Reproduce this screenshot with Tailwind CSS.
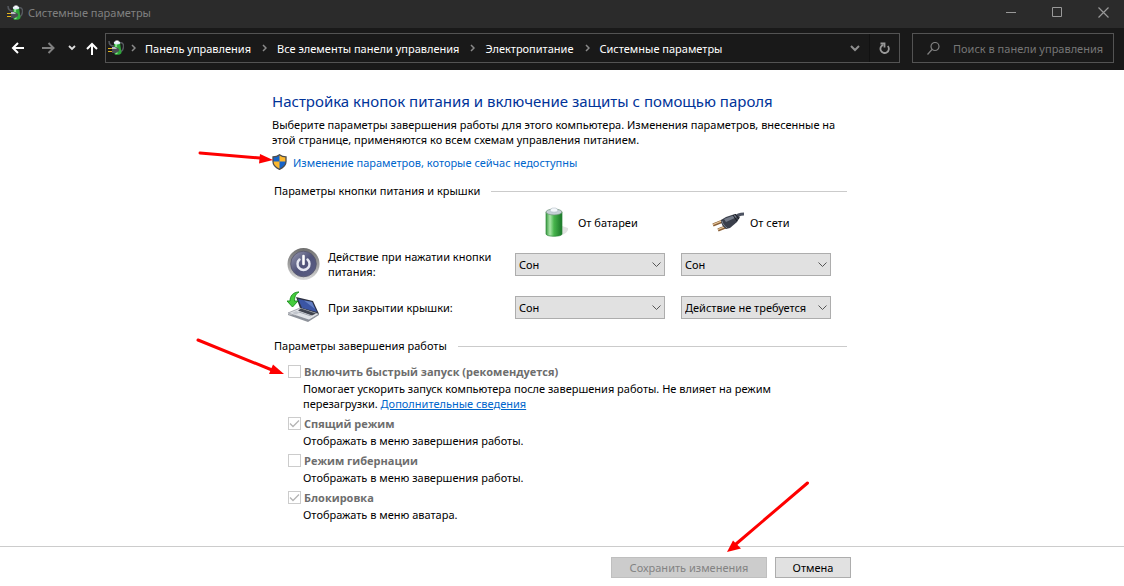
<!DOCTYPE html>
<html lang="ru">
<head>
    <meta charset="UTF-8">
    <meta name="viewport" content="width=device-width, initial-scale=1.0">
    <title>Системные параметры</title>
    <script src="https://cdn.jsdelivr.net/npm/@tailwindcss/browser@4"></script>
</head>
<body class="min-h-screen flex flex-col bg-white text-black text-[11px] leading-[15px] font-['Noto_Sans',sans-serif]">

    <!-- Shared icon -->
    <svg class="hidden">
        <symbol id="power-icon" viewBox="0 0 16 16">
            <path d="M1 1c0 3 2 5 5 5M12 3c3-1 4 2 3.300 5s-2 4-4.300 4" fill="none" stroke="#565a60" stroke-width="1.500"/>
            <path d="M6 3l6-.5 1.500 10.500c-1 2-6 2.500-7 1z" fill="#2ea53a"/>
            <path d="M7 4l2 0 .5 10-2 .3z" fill="#84e588"/>
            <ellipse cx="9" cy="2.800" rx="3.200" ry="1.700" fill="#e4ebf8"/>
            <path d="M7.500.5h3v2h-3z" fill="#fff"/>
            <path d="M4 7h4l3 2v2l-3 2H4z" fill="#4a4d52"/>
            <path d="M4 7h3l2 2H4z" fill="#b9bcc2"/>
            <path d="M0 8.500h4M0 11.500h4" stroke="#e3b41b" stroke-width="1.200"/>
        </symbol>
    </svg>

    <!-- Title bar -->
    <header class="h-7 flex items-center bg-[#2b2b2b] text-[#808080] pl-[7px]">
        <div class="flex items-center gap-[5px] pb-[3px]">
            <svg class="size-4"><use href="#power-icon"/></svg>
            <span>Системные параметры</span>
        </div>
        <div class="ml-auto flex h-full">
            <button class="w-[46px] flex items-center justify-center pb-1 pl-1" aria-label="Свернуть">
                <svg class="size-[11px]" viewBox="0 0 11 11"><path d="M0 5.500h10" stroke="#999"/></svg>
            </button>
            <button class="w-[46px] flex items-center justify-center pb-1 pl-1" aria-label="Развернуть">
                <svg class="size-[11px]" viewBox="0 0 11 11"><path d="M.5.5h9v9h-9z" fill="none" stroke="#999"/></svg>
            </button>
            <button class="w-[46px] flex items-center justify-center pb-1 pl-1" aria-label="Закрыть">
                <svg class="size-[11px]" viewBox="0 0 11 11"><path d="M.5.5l10 10M10.500.5l-10 10" stroke="#999" stroke-width="1.200"/></svg>
            </button>
        </div>
    </header>

    <!-- Navigation -->
    <nav class="h-[42px] flex items-center bg-[#191919] text-white pl-[11px] pr-[10px] pb-[2px]">
        <button class="mr-[17px]" aria-label="Назад">
            <svg class="w-[14px] h-3" viewBox="0 0 14 12" fill="none" stroke="#fff" stroke-width="2"><path d="M13 6H2M7 1L2 6l5 5"/></svg>
        </button>
        <button class="mr-3" aria-label="Вперед">
            <svg class="w-[14px] h-3" viewBox="0 0 14 12" fill="none" stroke="#808080" stroke-width="2"><path d="M0 6h11M6.500 1l5 5-5 5"/></svg>
        </button>
        <button class="mr-[10px]" aria-label="Последние расположения">
            <svg class="w-2 h-[6px]" viewBox="0 0 8 6" fill="none" stroke="#ddd" stroke-width="1.800"><path d="M1 1l3 3 3-3"/></svg>
        </button>
        <button class="mr-[7px]" aria-label="Вверх">
            <svg class="w-3 h-[13px]" viewBox="0 0 12 13" fill="none" stroke="#fff" stroke-width="2"><path d="M6 13V2M1 7l5-5 5 5"/></svg>
        </button>

        <div class="flex-1 h-[30px] flex items-center border border-[#535353] pl-[2px]">
            <svg class="size-4 mr-[7px]"><use href="#power-icon"/></svg>
            <ol class="flex items-center whitespace-nowrap">
                <li class="flex items-center">
                    <svg class="w-[5px] h-2 mr-[9px]" viewBox="0 0 5 8" fill="none" stroke="#8a8a8a" stroke-width="1.500"><path d="M1 1l3 3-3 3"/></svg>
                    <a href="#">Панель управления</a>
                </li>
                <li class="flex items-center">
                    <svg class="w-[5px] h-2 ml-[11px] mr-[10px]" viewBox="0 0 5 8" fill="none" stroke="#8a8a8a" stroke-width="1.500"><path d="M1 1l3 3-3 3"/></svg>
                    <a href="#">Все элементы панели управления</a>
                </li>
                <li class="flex items-center">
                    <svg class="w-[5px] h-2 ml-[11px] mr-[10px]" viewBox="0 0 5 8" fill="none" stroke="#8a8a8a" stroke-width="1.500"><path d="M1 1l3 3-3 3"/></svg>
                    <a href="#">Электропитание</a>
                </li>
                <li class="flex items-center">
                    <svg class="w-[5px] h-2 ml-[11px] mr-[10px]" viewBox="0 0 5 8" fill="none" stroke="#8a8a8a" stroke-width="1.500"><path d="M1 1l3 3-3 3"/></svg>
                    <a href="#">Системные параметры</a>
                </li>
            </ol>
            <button class="ml-auto h-full w-[30px] flex items-center justify-center border-r border-[#111]" aria-label="Предыдущие расположения">
                <svg class="w-[10px] h-[7px]" viewBox="0 0 10 7" fill="none" stroke="#8f8f8f" stroke-width="2"><path d="M1 1l4 4 4-4"/></svg>
            </button>
            <button class="h-full w-[29px] flex items-center justify-center" aria-label="Обновить">
                <svg class="w-[11px] h-3" viewBox="0 0 11 12" fill="none" stroke="#999" stroke-width="1.800"><path d="M8.800 4a4.200 4.200 0 1 1-4.500-1.200"/><path d="M1.500 1.500h4v4"/></svg>
            </button>
        </div>

        <label class="ml-3 h-[30px] w-[202px] flex items-center border border-[#535353] pl-[14px]">
            <svg class="size-[13px] mr-[13px] shrink-0" viewBox="0 0 13 13" fill="none" stroke="#808080" stroke-width="1.200"><circle cx="8" cy="4.500" r="4"/><path d="M5 7.500L.5 12.500"/></svg>
            <input type="text" class="w-full min-w-0 outline-none placeholder-[#767676]" placeholder="Поиск в панели управления" aria-label="Поиск в панели управления">
        </label>
    </nav>

    <main class="flex-1 pt-[19px] pb-6">
        <div class="relative w-full max-w-[580px] mx-auto">
            <h1 class="text-[15px] leading-6 text-[#003399]">Настройка кнопок питания и включение защиты с помощью пароля</h1>
            <p class="mt-1">Выберите параметры завершения работы для этого компьютера. Изменения параметров, внесенные на этой странице, применяются ко всем схемам управления питанием.</p>
            <a href="#" class="mt-[7px] flex items-center gap-[6px] h-4 text-[#0066cc]">
                <svg class="w-[15px] h-4" viewBox="0 0 15 16">
                    <path d="M7.500.7C5.500 2.300 3.500 2.800 1 2.800v4.700c0 3.500 2.500 6 6.500 7.800 4-1.800 6.500-4.300 6.500-7.800V2.800C11.500 2.800 9.500 2.300 7.500.7z" fill="#fcb82e"/>
                    <path d="M7.500.7C5.500 2.300 3.500 2.800 1 2.800V7.500h6.500zM7.500 7.500v7.800c4-1.800 6.500-4.300 6.500-7.800z" fill="#1663c7"/>
                    <path d="M7.500.7C5.500 2.300 3.500 2.800 1 2.800v4.700c0 3.500 2.500 6 6.500 7.800 4-1.800 6.500-4.300 6.500-7.800V2.800C11.500 2.800 9.500 2.300 7.500.7z" fill="none" stroke="#4c4c4c" stroke-width="1.300"/>
                </svg>
                Изменение параметров, которые сейчас недоступны
            </a>

            <!-- Power buttons and lid -->
            <section class="mt-[13px]">
                <div class="flex items-center gap-[11px] pl-[2px] pr-[5px]">
                    <h2 class="leading-4">Параметры кнопки питания и крышки</h2>
                    <span class="flex-1 h-px bg-[#cbcbcb]"></span>
                </div>
                <div class="mt-[7px] pl-[15px] pr-[21px] grid grid-cols-[1fr_150px_150px] gap-x-4 gap-y-[9px] items-center">
                    <div class="col-start-2 h-8 flex items-center gap-2 pl-[27px]">
                        <svg class="w-7 h-8" viewBox="0 0 28 32">
                            <defs>
                                <linearGradient id="cell"><stop offset="0" stop-color="#3c9a44"/><stop offset=".25" stop-color="#a9e6a8"/><stop offset=".5" stop-color="#47b54c"/><stop offset="1" stop-color="#1a7628"/></linearGradient>
                            </defs>
                            <path d="M20 20l6 2c1 3-3 6-8 8z" fill="#e2e2e2"/>
                            <path d="M4 6v22c0 3 16 3 16 0V6z" fill="url(#cell)" stroke="#2b8a38" stroke-width=".7"/>
                            <ellipse cx="12" cy="6" rx="8" ry="3" fill="#c6d0d6" stroke="#70917a" stroke-width=".7"/>
                            <path d="M8 5c1-3 2-3 4-3s3 0 4 3c-1 1.500-7 1.500-8 0z" fill="#f5f8fc" stroke="#a2afba" stroke-width=".5"/>
                        </svg>
                        <span>От батареи</span>
                    </div>
                    <div class="h-8 flex items-center gap-[6px] pl-[31px]">
                        <svg class="w-8 h-6" viewBox="0 0 32 24">
                            <path d="M22 8c3-3 5-4 10-4" fill="none" stroke="#4d5361" stroke-width="3"/>
                            <path d="M1 15l10-4M6 20l10-4" stroke="#8a6038" stroke-width="3"/>
                            <path d="M1 14.500l10-4M6 19.500l10-4" stroke="#e8c99c" stroke-width="1.300"/>
                            <path d="M9 10l5-3 9-3 5 3-3 5-7 6-4 1c-3-2-5-5-5-9z" fill="#3a3f4b"/>
                            <path d="M12 9l11-4 2 2-11 5z" fill="#747b89"/>
                            <path d="M10 11c1 4 3 5 5 7" fill="none" stroke="#7d8490"/>
                            <path d="M21 5l4 6M23 4l4 5" stroke="#171a21"/>
                        </svg>
                        <span>От сети</span>
                    </div>

                    <div class="flex items-center gap-2 h-[34px]">
                        <svg class="w-[33px] h-[34px] shrink-0" viewBox="0 0 33 34">
                            <defs>
                                <linearGradient id="rim" x2="0" y2="1"><stop offset="0" stop-color="#6e6e6e"/><stop offset=".6" stop-color="#a8a8a8"/><stop offset="1" stop-color="#dcdcdc"/></linearGradient>
                                <linearGradient id="disc" x2="1" y2="1"><stop offset="0" stop-color="#9a9cb2"/><stop offset=".5" stop-color="#51547a"/><stop offset="1" stop-color="#5c5f86"/></linearGradient>
                            </defs>
                            <circle cx="16.500" cy="17" r="16" fill="url(#rim)"/>
                            <circle cx="16.500" cy="17" r="12.800" fill="url(#disc)" stroke="#55566b" stroke-width=".8"/>
                            <path d="M12.500 12.500a6 6 0 1 0 8 0" fill="none" stroke="#e6e8f2" stroke-width="2.400" stroke-linecap="round"/>
                            <path d="M16.500 9v8" stroke="#fff" stroke-width="2.600" stroke-linecap="round"/>
                        </svg>
                        <span>Действие при нажатии кнопки питания:</span>
                    </div>
                    <div class="relative">
                        <select class="appearance-none block w-full h-[23px] pl-[3px] pr-5 bg-[#e1e1e1] border border-[#adadad]" aria-label="Кнопка питания, от батареи"><option>Сон</option></select>
                        <svg class="absolute right-1 top-2 w-[9px] h-[7px] pointer-events-none" viewBox="0 0 9 7" fill="none" stroke="#555"><path d="M.5 1.500l4 4 4-4"/></svg>
                    </div>
                    <div class="relative">
                        <select class="appearance-none block w-full h-[23px] pl-[3px] pr-5 bg-[#e1e1e1] border border-[#adadad]" aria-label="Кнопка питания, от сети"><option>Сон</option></select>
                        <svg class="absolute right-1 top-2 w-[9px] h-[7px] pointer-events-none" viewBox="0 0 9 7" fill="none" stroke="#555"><path d="M.5 1.500l4 4 4-4"/></svg>
                    </div>

                    <div class="flex items-center gap-2 h-[34px]">
                        <svg class="w-[33px] h-[34px] shrink-0" viewBox="0 0 33 34">
                            <path d="M1 24v1l20 7 11-7v-2l-10 5z" fill="#8f939b"/>
                            <path d="M9 7l17 4 6 13-19-6z" fill="#2d3140"/>
                            <path d="M11 9l14 3 5 10-15-4z" fill="#3b55a4"/>
                            <path d="M17 10.500l8 1.500 3 7z" fill="#6480c4"/>
                            <path d="M1 23l12-5 19 6-10 6z" fill="#e0e2e6" stroke="#787d88" stroke-width=".6"/>
                            <path d="M11 20.500l3-2 15 5-4 2z" fill="#41454f"/>
                            <path d="M5 23l4-2 4 1.500-4 2z" fill="#c2c6cd"/>
                            <path d="M12 22l12 4" stroke="#9398a1" stroke-width=".8"/>
                            <path d="M12 2C6 2 3 6 3 11H0l5.500 6L11 11H7.500c0-4 1-7 4.500-9z" fill="#45cc3c" stroke="#188c1d" stroke-width=".9"/>
                        </svg>
                        <span>При закрытии крышки:</span>
                    </div>
                    <div class="relative">
                        <select class="appearance-none block w-full h-[23px] pl-[3px] pr-5 bg-[#e1e1e1] border border-[#adadad]" aria-label="Закрытие крышки, от батареи"><option>Сон</option></select>
                        <svg class="absolute right-1 top-2 w-[9px] h-[7px] pointer-events-none" viewBox="0 0 9 7" fill="none" stroke="#555"><path d="M.5 1.500l4 4 4-4"/></svg>
                    </div>
                    <div class="relative">
                        <select class="appearance-none block w-full h-[23px] pl-[3px] pr-5 bg-[#e1e1e1] border border-[#adadad]" aria-label="Закрытие крышки, от сети"><option>Действие не требуется</option></select>
                        <svg class="absolute right-1 top-2 w-[9px] h-[7px] pointer-events-none" viewBox="0 0 9 7" fill="none" stroke="#555"><path d="M.5 1.500l4 4 4-4"/></svg>
                    </div>
                </div>
            </section>

            <!-- Shutdown settings -->
            <section class="mt-[14px]">
                <div class="flex items-center gap-[11px] pl-[2px] pr-[5px]">
                    <h2 class="leading-4">Параметры завершения работы</h2>
                    <span class="flex-1 h-px bg-[#cbcbcb]"></span>
                </div>
                <div class="mt-2 pl-4 flex flex-col gap-[3px]">
                    <div>
                        <label class="flex items-center gap-[3px] h-[19px] font-['Open_Sans','Noto_Sans',sans-serif] font-bold text-[#6d6d6d]">
                            <input type="checkbox" disabled class="appearance-none size-[13px] border border-[#cccccc]">
                            Включить быстрый запуск (рекомендуется)
                        </label>
                        <p class="pl-[15px] pr-14">Помогает ускорить запуск компьютера после завершения работы. Не влияет на режим перезагрузки. <a href="#" class="text-[#0066cc] underline">Дополнительные сведения</a></p>
                    </div>
                    <div>
                        <label class="relative flex items-center gap-[3px] h-[19px] font-['Open_Sans','Noto_Sans',sans-serif] font-bold text-[#6d6d6d]">
                            <input type="checkbox" checked disabled class="appearance-none size-[13px] border border-[#cccccc]">
                            <svg class="absolute left-0 size-[13px]" viewBox="0 0 13 13" fill="none" stroke="#b5b5b5" stroke-width="1.300"><path d="M2 6.500l3 3 6-6"/></svg>
                            Спящий режим
                        </label>
                        <p class="pl-[15px]">Отображать в меню завершения работы.</p>
                    </div>
                    <div>
                        <label class="flex items-center gap-[3px] h-[19px] font-['Open_Sans','Noto_Sans',sans-serif] font-bold text-[#6d6d6d]">
                            <input type="checkbox" disabled class="appearance-none size-[13px] border border-[#cccccc]">
                            Режим гибернации
                        </label>
                        <p class="pl-[15px]">Отображать в меню завершения работы.</p>
                    </div>
                    <div>
                        <label class="relative flex items-center gap-[3px] h-[19px] font-['Open_Sans','Noto_Sans',sans-serif] font-bold text-[#6d6d6d]">
                            <input type="checkbox" checked disabled class="appearance-none size-[13px] border border-[#cccccc]">
                            <svg class="absolute left-0 size-[13px]" viewBox="0 0 13 13" fill="none" stroke="#b5b5b5" stroke-width="1.300"><path d="M2 6.500l3 3 6-6"/></svg>
                            Блокировка
                        </label>
                        <p class="pl-[15px]">Отображать в меню аватара.</p>
                    </div>
                </div>
            </section>

            <!-- Red pointer arrows -->
            <svg class="absolute -left-20 -top-5 w-[660px] h-[486px] pointer-events-none" viewBox="0 0 660 486" fill="#fe0000" stroke="#fe0000" stroke-width="3" stroke-linecap="round">
                <path d="M8 84l60 5"/>
                <path d="M81 91L67 94.500 68 85z" stroke="none"/>
                <path d="M6 271l74 30"/>
                <path d="M92 305L77 305 81 295.500z" stroke="none"/>
                <path d="M615.500 414L544 475"/>
                <path d="M535 483L541 471.500 549 479.500z" stroke="none"/>
            </svg>
        </div>
    </main>

    <footer class="border-t border-[#cccccc] pt-[10px] pb-2">
        <div class="w-full max-w-[580px] mx-auto flex justify-end gap-2 pr-px">
            <button disabled class="h-[21px] w-[156px] bg-[#cccccc] border border-[#bfbfbf] text-[#838383]">Сохранить изменения</button>
            <button class="h-[21px] w-[76px] bg-[#e1e1e1] border border-[#adadad]">Отмена</button>
        </div>
    </footer>
</body>
</html>
